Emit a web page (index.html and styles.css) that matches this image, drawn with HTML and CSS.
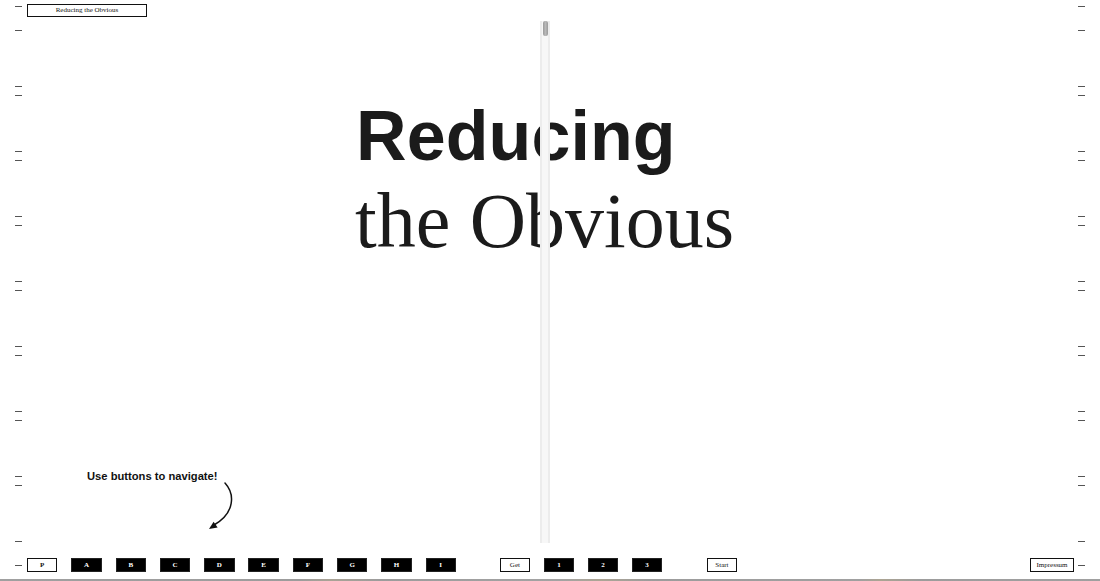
FILE: index.html
```html
<!DOCTYPE html>
<html lang="en">
<head>
<meta charset="utf-8">
<title>Reducing the Obvious</title>
<link rel="stylesheet" href="styles.css">
</head>
<body>
<div class="frame">
  <div class="ruler ruler-left">
    <div class="tick"></div><div class="tick s"></div>
    <div class="tick"></div><div class="tick p"></div>
    <div class="tick"></div><div class="tick p"></div>
    <div class="tick"></div><div class="tick p"></div>
    <div class="tick"></div><div class="tick p"></div>
    <div class="tick"></div><div class="tick p"></div>
    <div class="tick"></div><div class="tick p"></div>
    <div class="tick"></div><div class="tick p"></div>
    <div class="tick"></div><div class="tick s"></div>
  </div>

  <main class="center">
    <header class="top">
      <button class="btn btn-outline btn-title">Reducing the Obvious</button>
    </header>

    <section class="stage">
      <h1 class="title">
        <span class="l1">Reducing</span>
        <span class="l2">the Obvious</span>
      </h1>
    </section>

    <div class="hint">
      <p class="hint-text">Use buttons to navigate!</p>
      <svg class="arrow" width="32" height="48" viewBox="0 0 32 48" aria-hidden="true">
        <path d="M20 1 C 30 12, 30 31, 9 43" fill="none" stroke="#111" stroke-width="1.5" stroke-linecap="round"/>
        <path d="M4 47 L8.6 39.8 L12.6 45.6 Z" fill="#111"/>
      </svg>
    </div>

    <nav class="nav">
      <div class="group group-letters">
        <button class="btn btn-outline btn-bold">P</button>
        <button class="btn btn-dark">A</button>
        <button class="btn btn-dark">B</button>
        <button class="btn btn-dark">C</button>
        <button class="btn btn-dark">D</button>
        <button class="btn btn-dark">E</button>
        <button class="btn btn-dark">F</button>
        <button class="btn btn-dark">G</button>
        <button class="btn btn-dark">H</button>
        <button class="btn btn-dark">I</button>
      </div>
      <div class="group group-get">
        <button class="btn btn-outline">Get</button>
        <button class="btn btn-dark">1</button>
        <button class="btn btn-dark">2</button>
        <button class="btn btn-dark">3</button>
      </div>
      <button class="btn btn-outline btn-start">Start</button>
      <button class="btn btn-outline btn-impressum">Impressum</button>
    </nav>
  </main>

  <div class="ruler ruler-right">
    <div class="tick"></div><div class="tick s"></div>
    <div class="tick"></div><div class="tick p"></div>
    <div class="tick"></div><div class="tick p"></div>
    <div class="tick"></div><div class="tick p"></div>
    <div class="tick"></div><div class="tick p"></div>
    <div class="tick"></div><div class="tick p"></div>
    <div class="tick"></div><div class="tick p"></div>
    <div class="tick"></div><div class="tick p"></div>
    <div class="tick"></div><div class="tick s"></div>
  </div>

  <div class="scroller"><div class="thumb"></div></div>
</div>
<div class="strip"></div>
</body>
</html>
```

FILE: styles.css
```css
* { box-sizing: border-box; }

html, body {
  margin: 0;
  padding: 0;
  background: #ffffff;
}

body {
  width: 1100px;
  height: 581px;
  overflow: hidden;
  display: flex;
  flex-direction: column;
  font-family: "Liberation Serif", "Times New Roman", serif;
  color: #111;
}

.frame {
  position: relative;
  height: 579px;
  display: grid;
  grid-template-columns: 27px 1fr 26px;
}

/* side rulers */
.ruler {
  display: flex;
  flex-direction: column;
}
.ruler-left { padding-left: 15px; }
.ruler-right { padding-left: 4px; }

.tick {
  width: 7px;
  height: 1px;
  background: #555;
  margin-top: 55px;
}
.tick:first-child { margin-top: 6px; }
.tick.p { margin-top: 8px; }
.tick.s { margin-top: 23px; }

/* center column */
.center {
  display: flex;
  flex-direction: column;
  min-width: 0;
}

.top {
  padding-top: 4px;
  display: flex;
}

.btn {
  box-sizing: border-box;
  margin: 0;
  padding: 0;
  height: 14px;
  width: 30px;
  border: 1.5px solid #111;
  border-radius: 0;
  font-family: "Liberation Serif", "Times New Roman", serif;
  font-size: 7px;
  line-height: 1;
  display: flex;
  align-items: center;
  justify-content: center;
  flex: none;
}
.btn-outline {
  background: #fff;
  color: #111;
}
.btn-dark {
  background: #000;
  color: #fff;
  font-weight: 700;
  border-color: #222;
}
.btn-bold { font-weight: 700; }

.btn-title {
  width: 120px;
  height: 13px;
}

.stage {
  flex: 1;
  padding-top: 78px;
  padding-left: 329px;
}

.title {
  margin: 0;
  color: #1b1b1b;
  font-weight: normal;
}
.title .l1 {
  display: block;
  font-family: "Liberation Sans", Arial, sans-serif;
  font-weight: 700;
  font-size: 70px;
  line-height: 83px;
  letter-spacing: 0.1px;
}
.title .l2 {
  display: block;
  font-family: "Liberation Serif", "Times New Roman", serif;
  font-size: 78px;
  line-height: 86px;
  margin-left: -1px;
}

.hint {
  padding-left: 60px;
}
.hint-text {
  margin: 0;
  font-family: "Liberation Sans", Arial, sans-serif;
  font-weight: 700;
  font-size: 11.2px;
  line-height: 12px;
  color: #111;
}
.arrow {
  display: block;
  margin-left: 118px;
}

.nav {
  display: flex;
  align-items: center;
  height: 14px;
  margin-top: 28px;
  margin-bottom: 7px;
}
.group {
  display: flex;
}
.group-letters { gap: 13.9px; }
.group-letters .btn { width: 30.4px; }
.group-get {
  gap: 14px;
  margin-left: 44px;
}
.btn-start { margin-left: 45px; }
.btn-impressum {
  margin-left: auto;
  width: 44px;
}

/* center scroll column overlaying the title */
.scroller {
  position: absolute;
  left: 540px;
  top: 21px;
  width: 10px;
  height: 522px;
  background: linear-gradient(to right, #ececec 0 2px, #f7f7f7 2px 8px, #ececec 8px 10px);
}
.thumb {
  margin-left: 3px;
  width: 5px;
  height: 15px;
  border-radius: 2px;
  background: linear-gradient(to right, #9a9a9a, #b8b8b8 50%, #9a9a9a);
}

.strip {
  height: 2px;
  background: linear-gradient(to right,
    #a0a0a0 0, #9c9c9c 300px,
    #aaa396 330px, #9c9c9c 380px,
    #a3a3a3 560px, #ada595 600px,
    #9c9c9c 650px, #a0a0a0 860px,
    #aca493 880px, #9c9c9c 920px,
    #a0a0a0 1100px);
}
```
